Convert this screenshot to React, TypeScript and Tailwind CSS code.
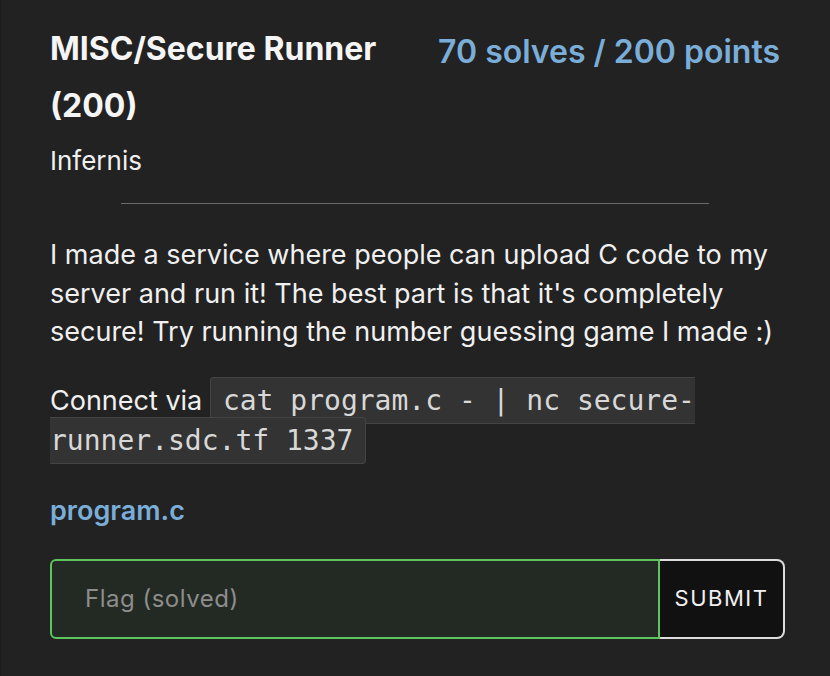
export default function App() {
  return (
    <div className="min-h-[676px] w-[830px] bg-[#222222] border-l border-[#1b1b1b] text-white" style={{ fontFamily: "Inter, 'Noto Sans', sans-serif" }}>
      <div className="pl-[49px] pr-[50px] pt-[20px]">
        <div className="flex justify-between items-start">
          <h1 className="w-[360px] text-[32px] font-bold leading-[57px] text-[#f5f5f5]">MISC/Secure Runner (200)</h1>
          <div className="text-[32px] font-semibold leading-[56px] text-[#7aaed9] mt-[4px]">70 solves / 200 points</div>
        </div>
        <div className="text-[26px] leading-[34px] mt-[10px] text-[#f0f0f0]">Infernis</div>
        <hr className="mx-auto w-[588px] border-0 border-t border-[#6a6a6a] mt-[25px]" />
        <p className="text-[27px] leading-[38.5px] mt-[32px] text-[#f0f0f0]">
          I made a service where people can upload C code to my server and run it! The best part is that it's completely secure! Try running the number guessing game I made :)
        </p>
        <p className="text-[27px] leading-[40px] mt-[29px] text-[#f0f0f0]">
          Connect via{" "}
          <code className="bg-[#333333] border border-[#444444] rounded-[4px] px-[12px] py-[6px] text-[28px] text-[#d8d8d8]" style={{ fontFamily: "'DejaVu Sans Mono', monospace" }}>
            cat program.c - | nc secure-runner.sdc.tf 1337
          </code>
        </p>
        <div className="mt-[32px] text-[27px] font-semibold text-[#7aaed9] leading-[36px]">program.c</div>
        <div className="mt-[30px] flex h-[80px] w-[735px]">
          <div className="flex-1 flex items-center bg-[#232a23] border-2 border-[#5ec45e] rounded-l-[6px] pl-[33px] text-[24px] text-[#8d8d8d] tracking-[0.5px]">Flag (solved)</div>
          <div className="w-[125px] flex items-center justify-center bg-[#111111] border-2 border-l-0 border-[#dcdcdc] rounded-r-[8px] text-[22px] tracking-[1.5px] text-[#f0f0f0]">SUBMIT</div>
        </div>
      </div>
    </div>
  );
}
